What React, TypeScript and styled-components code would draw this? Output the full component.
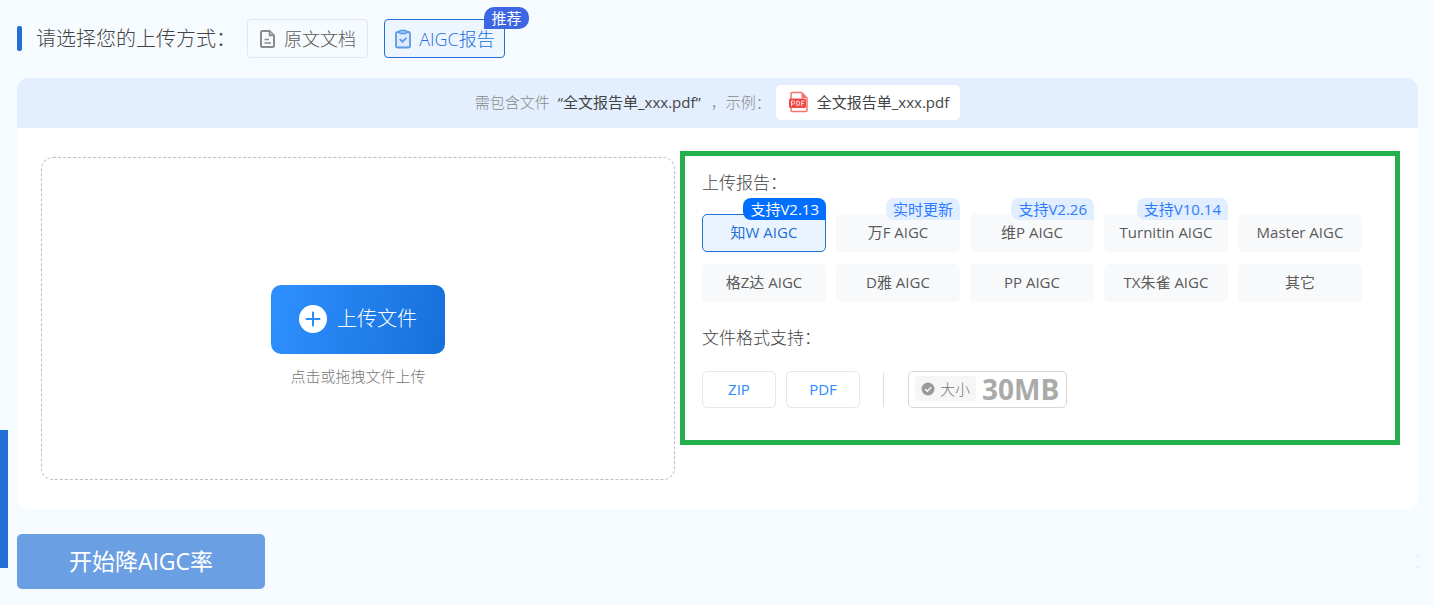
import React, { useState } from 'react';
import styled, { createGlobalStyle, css } from 'styled-components';

const GlobalStyle = createGlobalStyle`
  *, *::before, *::after { box-sizing: border-box; }
  body {
    margin: 0;
    background: #f6fbff;
    color: #5a5a5a;
    font-family: "Open Sans", "Noto Sans CJK SC", sans-serif;
    font-size: 15px;
    line-height: 22px;
    font-weight: 400;
  }
  button { font: inherit; color: inherit; cursor: pointer; margin: 0; padding: 0; }
`;

const Page = styled.main`
  padding: 19px 16px 16px 17px;
`;

const MethodRow = styled.section`
  display: flex;
  align-items: center;
  margin-bottom: 20px;
`;

const MethodTitle = styled.h2`
  display: flex;
  align-items: center;
  gap: 14px;
  width: 230px;
  margin: 0;
  font-size: 20px;
  line-height: 26px;
  font-weight: 300;
  white-space: nowrap;
  color: #444;

  &::before {
    content: '';
    width: 5px;
    height: 25px;
    border-radius: 2px;
    background: #226fd6;
  }
`;

const MethodButton = styled.button<{ $active: boolean }>`
  position: relative;
  display: flex;
  align-items: center;
  justify-content: center;
  gap: 7px;
  height: 39px;
  min-width: 121px;
  margin-right: 16px;
  border: 1px solid #e4e7ed;
  border-radius: 4px;
  background: transparent;
  font-size: 18px;
  font-weight: 300;
  white-space: nowrap;
  ${(p) =>
    p.$active &&
    css`
      border-color: #226fd6;
      background: #edf5ff;
      color: #226fd6;
    `}
`;

const Recommend = styled.span`
  position: absolute;
  top: -13px;
  right: -25px;
  width: 45px;
  height: 22px;
  border-radius: 10px 10px 10px 0;
  background: #3e66e3;
  color: #fff;
  font-size: 15px;
  line-height: 22px;
  font-weight: 400;
`;

const Card = styled.section`
  border-radius: 12px;
  overflow: hidden;
  background: #fff;
`;

const Notice = styled.div`
  display: flex;
  align-items: center;
  justify-content: center;
  height: 50px;
  padding-bottom: 2px;
  background: #e3effe;
  color: #888;
  white-space: pre;
  font-weight: 300;
`;

const FileName = styled.span`
  margin: 0 10px 0 8px;
  color: #444;
  font-weight: 400;
`;

const Sample = styled.button`
  display: flex;
  align-items: center;
  gap: 8px;
  height: 35px;
  margin-left: 5px;
  padding: 0 11px;
  border: 0;
  border-radius: 5px;
  background: #fff;
  color: #444;
  font-weight: 400;
`;

const Body = styled.div`
  display: grid;
  grid-template-columns: 634fr 720fr;
  align-items: start;
  gap: 5px;
  padding: 23px 18px 29px 24px;
`;

const DropZone = styled.div`
  display: flex;
  flex-direction: column;
  align-items: center;
  justify-content: center;
  gap: 11px;
  min-height: 323px;
  margin-top: 6px;
  padding-top: 34px;
  border: 1px dashed #bfbfbf;
  border-radius: 12px;
  color: #777;
  font-weight: 300;
`;

const UploadButton = styled.button`
  display: flex;
  align-items: center;
  justify-content: center;
  gap: 10px;
  width: 174px;
  height: 69px;
  border: 0;
  border-radius: 10px;
  background: linear-gradient(100deg, #2e90ff 0%, #1670da 100%);
  color: #fff;
  font-size: 20px;
  line-height: 28px;
`;

const Options = styled.section`
  border: 5px solid #24b14d;
  padding: 14px 33px 32px 17px;
`;

const OptionTitle = styled.h3`
  margin: 0;
  font-size: 17px;
  line-height: 26px;
  font-weight: 300;
  color: #444;
`;

const ReportGrid = styled.div`
  display: grid;
  grid-template-columns: repeat(5, minmax(0, 1fr));
  gap: 12px 10px;
  margin: 18px 0 23px;
`;

const Tag = styled.span<{ $active: boolean }>`
  position: absolute;
  top: -17px;
  right: -1px;
  height: 22px;
  padding: 0 7px;
  border-radius: 8px 8px 0 8px;
  background: ${(p) => (p.$active ? '#006eff' : '#e1eeff')};
  color: ${(p) => (p.$active ? '#fff' : '#2f7bff')};
  font-size: 15px;
  line-height: 22px;
`;

const ReportButton = styled.button<{ $active: boolean }>`
  position: relative;
  height: 38px;
  padding-bottom: 2px;
  border: 1px solid ${(p) => (p.$active ? '#226fd6' : '#f8f9fb')};
  border-radius: 5px;
  background: ${(p) => (p.$active ? '#eaf4ff' : '#f8f9fb')};
  color: ${(p) => (p.$active ? '#226fd6' : '#5a5a5a')};
  white-space: nowrap;
`;

const FormatRow = styled.div`
  display: flex;
  align-items: center;
  gap: 10px;
  margin-top: 20px;
`;

const Format = styled.span`
  width: 74px;
  height: 37px;
  border: 1px solid #e4e7ed;
  border-radius: 5px;
  color: #2b8aff;
  line-height: 35px;
  text-align: center;
`;

const Divider = styled.span`
  width: 1px;
  height: 34px;
  margin: 0 14px 0 13px;
  background: #dcdfe6;
`;

const SizeBox = styled.div`
  display: flex;
  align-items: center;
  gap: 6px;
  height: 37px;
  padding: 0 7px 2px 6px;
  border: 1px solid #d6d6d6;
  border-radius: 5px;
`;

const SizeLabel = styled.span`
  display: flex;
  align-items: center;
  gap: 5px;
  height: 25px;
  padding: 0 6px;
  border-radius: 4px;
  background: #f6f6f6;
  color: #777;
  font-weight: 300;
`;

const SizeValue = styled.strong`
  color: #aaa;
  font-size: 28px;
  line-height: 34px;
  font-weight: 700;
`;

const Footer = styled.footer`
  display: flex;
  align-items: center;
  justify-content: space-between;
  margin-top: 25px;
`;

const StartButton = styled.button`
  width: 248px;
  height: 55px;
  padding-bottom: 2px;
  border: 0;
  border-radius: 5px;
  background: #6b9fe4;
  color: #fff;
  font-size: 23px;
  line-height: 32px;
`;

const Dots = styled.span`
  display: grid;
  gap: 10px;

  &::before, &::after {
    content: '';
    width: 1px;
    height: 1px;
    background: #c9cff0;
  }
`;

const SideHandle = styled.aside`
  position: fixed;
  left: 0;
  bottom: 37px;
  width: 8px;
  height: 138px;
  background: #226fd6;
`;

const DocIcon = () => (
  <svg width="18" height="20" viewBox="0 0 18 20" fill="none" stroke="#8a8a8a" strokeWidth="2" aria-hidden="true">
    <path d="M2 3.500Q2 2 3.500 2H10.500L15 6.500V16.500Q15 18 13.500 18H3.500Q2 18 2 16.500Z" />
    <path d="M10.500 2V6.500H15" strokeWidth="1.500" fill="#bbb" />
    <path d="M5.500 10.500H10M5.500 14H12" strokeWidth="1.500" />
  </svg>
);

const ClipboardIcon = () => (
  <svg width="18" height="20" viewBox="0 0 18 20" fill="none" stroke="#5b98e6" strokeWidth="1.800" aria-hidden="true">
    <rect x="2" y="3" width="14" height="15.500" rx="1.500" fill="#dceafc" />
    <rect x="5.500" y="1.500" width="7" height="3" rx="1" fill="#a9cbf6" strokeWidth="1.400" />
    <path d="M5.700 10L8.300 12.700L12.500 8.800" />
  </svg>
);

const PdfIcon = () => (
  <svg width="22" height="22" viewBox="0 0 22 22" fill="none" aria-hidden="true">
    <path d="M4 9V2.500Q4 1.500 5 1.500H14.500L20 7V19.500Q20 20.500 19 20.500H5Q4 20.500 4 19.500V16" stroke="#f6736f" strokeWidth="1.500" />
    <path d="M14.500 1.500V7H20Z" fill="#f6736f" />
    <rect x="2" y="7.500" width="17" height="9.500" rx="1.500" fill="#ef4a45" />
    <path d="M4.500 15V10H6.500Q8 10 8 11.500Q8 13 6.500 13H4.500M9.800 10V14.500H10.800Q12.700 14.500 12.700 12.200Q12.700 10 10.800 10ZM14.700 15V10H17.500M14.700 12.500H17" stroke="#ffd9d8" />
  </svg>
);

const PlusIcon = () => (
  <svg width="28" height="28" viewBox="0 0 28 28" aria-hidden="true">
    <circle cx="14" cy="14" r="14" fill="#fff" />
    <path d="M14 7.500V20.500M7.500 14H20.500" stroke="#2b8aff" strokeWidth="2" strokeLinecap="round" />
  </svg>
);

const CheckIcon = () => (
  <svg width="14" height="14" viewBox="0 0 14 14" aria-hidden="true">
    <circle cx="7" cy="7" r="6.500" fill="#999" />
    <path d="M4 7L6.300 9.200L10.200 5.200" fill="none" stroke="#f6f6f6" strokeWidth="1.600" />
  </svg>
);

const reports: { name: string; tag?: string }[] = [
  { name: '知W AIGC', tag: '支持V2.13' },
  { name: '万F AIGC', tag: '实时更新' },
  { name: '维P AIGC', tag: '支持V2.26' },
  { name: 'Turnitin AIGC', tag: '支持V10.14' },
  { name: 'Master AIGC' },
  { name: '格Z达 AIGC' },
  { name: 'D雅 AIGC' },
  { name: 'PP AIGC' },
  { name: 'TX朱雀 AIGC' },
  { name: '其它' },
];

export default function App() {
  const [method, setMethod] = useState('report');
  const [selected, setSelected] = useState(0);

  return (
    <>
      <GlobalStyle />
      <SideHandle />
      <Page>
        <MethodRow>
          <MethodTitle>请选择您的上传方式：</MethodTitle>
          <MethodButton type="button" $active={method === 'doc'} onClick={() => setMethod('doc')}>
            <DocIcon />
            原文文档
          </MethodButton>
          <MethodButton type="button" $active={method === 'report'} onClick={() => setMethod('report')}>
            <ClipboardIcon />
            AIGC报告
            <Recommend>推荐</Recommend>
          </MethodButton>
        </MethodRow>
        <Card>
          <Notice>
            需包含文件<FileName>“全文报告单_xxx.pdf”</FileName>，示例：
            <Sample type="button">
              <PdfIcon />
              全文报告单_xxx.pdf
            </Sample>
          </Notice>
          <Body>
            <DropZone>
              <UploadButton type="button">
                <PlusIcon />
                上传文件
              </UploadButton>
              点击或拖拽文件上传
            </DropZone>
            <Options>
              <OptionTitle>上传报告：</OptionTitle>
              <ReportGrid>
                {reports.map((r, i) => (
                  <ReportButton key={r.name} type="button" $active={i === selected} onClick={() => setSelected(i)}>
                    {r.name}
                    {r.tag && <Tag $active={i === selected}>{r.tag}</Tag>}
                  </ReportButton>
                ))}
              </ReportGrid>
              <OptionTitle>文件格式支持：</OptionTitle>
              <FormatRow>
                <Format>ZIP</Format>
                <Format>PDF</Format>
                <Divider />
                <SizeBox>
                  <SizeLabel>
                    <CheckIcon />
                    大小
                  </SizeLabel>
                  <SizeValue>30MB</SizeValue>
                </SizeBox>
              </FormatRow>
            </Options>
          </Body>
        </Card>
        <Footer>
          <StartButton type="button">开始降AIGC率</StartButton>
          <Dots />
        </Footer>
      </Page>
    </>
  );
}
